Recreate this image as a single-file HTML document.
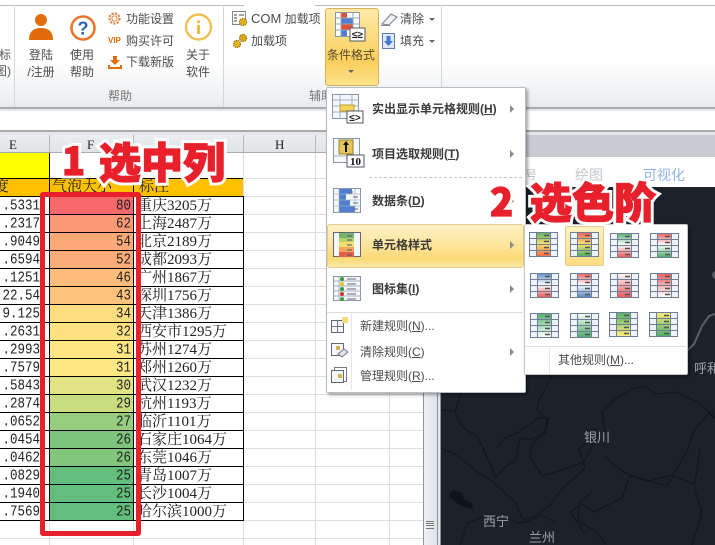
<!DOCTYPE html>
<html lang="zh"><head><meta charset="utf-8"><style>
html,body{margin:0;padding:0}
body{width:715px;height:545px;overflow:hidden;position:relative;background:#fff;font-family:"Liberation Sans","Noto Sans CJK SC",sans-serif;color:#4c4c4c;font-size:12px}
.a,.t{position:absolute;white-space:nowrap}
.t{line-height:16px}
.c{text-align:center}
.cell{position:absolute;font:15px/19px "Liberation Serif","Noto Serif CJK SC",serif;color:#222;white-space:nowrap}
.n{position:absolute;font:12.5px/19px "Liberation Mono",monospace;color:#222;white-space:nowrap;transform:scaleY(1.18)}
.hl{position:absolute;height:1px;background:#000;left:0;width:243px}
.gl{position:absolute;height:1px;background:#dcdee0;left:243px;width:180px}
.vl{position:absolute;width:1px;background:#dcdee0;top:153px;height:392px}
.m{font-weight:bold;color:#3a3a3a;font-size:12px}
.big,.bigf{position:absolute;white-space:nowrap;font-weight:900;font-family:"Noto Sans CJK SC","Liberation Sans",sans-serif}
.big{color:#fff;-webkit-text-stroke:7px #fff;text-shadow:0 0 3px rgba(90,90,90,.45)}
.bigf{color:#e8202c;-webkit-text-stroke:1.2px #e8202c}
.arr{position:absolute;width:0;height:0;border-left:3px solid transparent;border-right:3px solid transparent;border-top:3px solid #666}
.rar{position:absolute;left:510px;width:0;height:0;border-top:4px solid transparent;border-bottom:4px solid transparent;border-left:4px solid #8a8a8a}
u{text-decoration:underline}
</style></head><body>

<!-- ribbon -->
<div class="a" style="left:0;top:0;width:715px;height:5px;background:#fff"></div>
<div class="a" style="left:0;top:5px;width:244px;height:1px;background:#b9bbbe"></div>
<div class="a" style="left:315px;top:5px;width:400px;height:1px;background:#b9bbbe"></div>
<div class="a" style="left:0;top:6px;width:715px;height:101px;background:linear-gradient(#fff 0%,#fff 55%,#e9ecef 100%)"></div>
<div class="a" style="left:14px;top:7px;width:1px;height:100px;background:#d4d7da"></div>
<div class="a" style="left:223px;top:7px;width:1px;height:100px;background:#d4d7da"></div>
<div class="a" style="left:441px;top:7px;width:1px;height:100px;background:#d4d7da"></div>
<div class="a" style="left:0;top:107px;width:715px;height:2px;background:#a9acaf"></div>
<div class="a" style="left:0;top:109px;width:715px;height:2px;background:#e6e7e9"></div>
<div class="a" style="left:0;top:130px;width:715px;height:2px;background:#a8aaad"></div>
<div class="a" style="left:0;top:132px;width:715px;height:3px;background:#e4e6e9"></div>

<div class="t" style="left:-1px;top:47px;color:#555">标</div>
<div class="t" style="left:-5px;top:63px;color:#555">图)</div>

<!-- person -->
<svg class="a" style="left:26px;top:12px" width="30" height="30" viewBox="0 0 30 30"><circle cx="15" cy="8" r="6" fill="#e36c0a"/><path d="M3 28c0-9 5-12 12-12s12 3 12 12z" fill="#e36c0a"/></svg>
<div class="t c" style="left:21px;top:47px;width:40px">登陆</div>
<div class="t c" style="left:21px;top:64px;width:40px">/注册</div>
<!-- help -->
<svg class="a" style="left:69px;top:14px" width="28" height="28" viewBox="0 0 28 28"><circle cx="14" cy="14" r="11.5" fill="#fff" stroke="#e8762c" stroke-width="2.6"/><text x="14" y="20.5" text-anchor="middle" font-family="Liberation Sans" font-weight="bold" font-size="18" fill="#2f62b5">?</text></svg>
<div class="t c" style="left:63px;top:47px;width:38px">使用</div>
<div class="t c" style="left:63px;top:64px;width:38px">帮助</div>

<svg class="a" style="left:107px;top:11px" width="15" height="15" viewBox="0 0 15 15"><circle cx="7.5" cy="7.5" r="5" fill="none" stroke="#e0884a" stroke-width="2.2" stroke-dasharray="2.2 1.2"/><circle cx="7.5" cy="7.5" r="2.6" fill="none" stroke="#e0884a" stroke-width="1"/></svg>
<div class="t" style="left:126px;top:11px">功能设置</div>
<div class="a" style="left:108px;top:36px;font:bold 8px/9px 'Liberation Sans';color:#e36c0a">VIP</div>
<div class="t" style="left:126px;top:33px">购买许可</div>
<svg class="a" style="left:108px;top:55px" width="14" height="15" viewBox="0 0 14 15"><path d="M5 1h4v4h3L7 10 2 5h3z" fill="#e36c0a"/><path d="M1 10v3h12v-3" fill="none" stroke="#e36c0a" stroke-width="2"/></svg>
<div class="t" style="left:126px;top:54px">下载新版</div>
<svg class="a" style="left:184px;top:12px" width="29" height="30" viewBox="0 0 29 30"><circle cx="14.5" cy="15" r="12.5" fill="#fff" stroke="#f2bf52" stroke-width="2.4"/><rect x="13.2" y="13" width="2.6" height="9" fill="#f0b030"/><rect x="13.2" y="8.5" width="2.6" height="2.6" fill="#f0b030"/></svg>
<div class="t c" style="left:179px;top:47px;width:38px">关于</div>
<div class="t c" style="left:179px;top:64px;width:38px">软件</div>
<div class="t c" style="left:100px;top:88px;width:40px;color:#777">帮助</div>

<svg class="a" style="left:232px;top:11px" width="16" height="16" viewBox="0 0 16 16"><rect x=".5" y=".5" width="13" height="13" fill="#fff" stroke="#7a8a9c"/><path d="M2 4h3M2 7h3M2 10h3M7 4h5" stroke="#444"/><circle cx="11" cy="11" r="3.6" fill="#e0b020" stroke="#8a6c10" stroke-dasharray="1.4 .8"/></svg>
<div class="t" style="left:251px;top:11px"><span style="font-size:13px">COM</span> 加载项</div>
<svg class="a" style="left:232px;top:33px" width="16" height="16" viewBox="0 0 16 16"><circle cx="5" cy="11" r="3.6" fill="#e0b020" stroke="#8a6c10" stroke-dasharray="1.4 .8"/><circle cx="11" cy="5" r="3.6" fill="#d8a818" stroke="#8a6c10" stroke-dasharray="1.4 .8"/></svg>
<div class="t" style="left:251px;top:33px">加载项</div>
<div class="t" style="left:309px;top:88px;color:#777">辅助</div>

<!-- cond format button -->
<div class="a" style="left:325px;top:8px;width:52px;height:76px;border:1px solid #d9b15b;border-radius:3px;background:linear-gradient(#fde9a8 0%,#fcd977 45%,#fbcf5e 70%,#fde28f 100%)"></div>
<svg class="a" style="left:335px;top:12px" width="31" height="30" viewBox="0 0 31 30"><rect x=".5" y=".5" width="24" height="24" fill="#fff" stroke="#8a97a8"/><rect x="6" y="1" width="6" height="5" fill="#e0503c"/><rect x="6" y="6" width="12" height="6" fill="#4f7fd0"/><rect x="6" y="12" width="12" height="6" fill="#e0503c"/><rect x="6" y="18" width="6" height="6" fill="#4f7fd0"/><path d="M1 6h24M1 12h24M1 18h24M6 1v24M18 1v24" stroke="#9aa6b5" fill="none"/><rect x="15" y="16" width="15" height="13" fill="#fff" stroke="#555"/><text x="22.5" y="26" text-anchor="middle" font-size="10" font-weight="bold" font-family="Liberation Sans" fill="#222">≤≥</text></svg>
<div class="t c" style="left:325px;top:47px;width:52px;color:#5a4a2a">条件格式</div>
<div class="arr" style="left:348px;top:70px"></div>

<svg class="a" style="left:381px;top:12px" width="17" height="14" viewBox="0 0 17 14"><path d="M1 12L10 2l6 3-8 8z" fill="#eef0f3" stroke="#78828e"/><path d="M0 13.5h9" stroke="#78828e"/></svg>
<div class="t" style="left:400px;top:11px">清除</div>
<div class="arr" style="left:429px;top:18px"></div>
<svg class="a" style="left:382px;top:33px" width="15" height="16" viewBox="0 0 15 16"><rect x=".5" y=".5" width="12" height="15" fill="#dfe8f5" stroke="#5f7fb0"/><path d="M4.5 3h4v5h2.5L6.5 13 2 8h2.5z" fill="#3f78d0"/></svg>
<div class="t" style="left:400px;top:33px">填充</div>
<div class="arr" style="left:429px;top:40px"></div>

<!-- column headers -->
<div class="a" style="left:0;top:135px;width:423px;height:18px;background:linear-gradient(#eceef1,#dfe2e6)"></div>
<div class="a" style="left:49px;top:135px;width:1px;height:18px;background:#b4b7bb"></div>
<div class="a" style="left:133px;top:135px;width:1px;height:18px;background:#b4b7bb"></div>
<div class="a" style="left:243px;top:135px;width:1px;height:18px;background:#b4b7bb"></div>
<div class="a" style="left:315px;top:135px;width:1px;height:18px;background:#b4b7bb"></div>
<div class="cell" style="left:9px;top:135px;font-size:13px">E</div>
<div class="cell" style="left:87px;top:135px;font-size:13px">F</div>
<div class="cell" style="left:275px;top:135px;font-size:13px">H</div>
<div class="a" style="left:0;top:152px;width:423px;height:1px;background:#a8abaf"></div>

<!-- grid -->
<div class="a" style="left:0;top:153px;width:49px;height:25px;background:#ffff00"></div>
<div class="a" style="left:0;top:178px;width:243px;height:19px;background:#ffc000"></div>
<div class="vl" style="left:315px"></div>
<div class="vl" style="left:389px"></div>
<div class="vl" style="left:243px"></div>
<div class="gl" style="top:178px"></div><div class="gl" style="top:196px"></div><div class="gl" style="top:214px"></div><div class="gl" style="top:232px"></div><div class="gl" style="top:250px"></div><div class="gl" style="top:268px"></div><div class="gl" style="top:286px"></div><div class="gl" style="top:304px"></div><div class="gl" style="top:322px"></div><div class="gl" style="top:340px"></div><div class="gl" style="top:358px"></div><div class="gl" style="top:376px"></div><div class="gl" style="top:394px"></div><div class="gl" style="top:412px"></div><div class="gl" style="top:430px"></div><div class="gl" style="top:448px"></div><div class="gl" style="top:466px"></div><div class="gl" style="top:484px"></div><div class="gl" style="top:502px"></div><div class="gl" style="top:520px"></div><div class="gl" style="top:538px"></div>
<div class="gl" style="top:538px;left:0;width:243px"></div>
<div class="a" style="left:49px;top:521px;width:1px;height:24px;background:#dcdee0"></div>
<div class="a" style="left:133px;top:521px;width:1px;height:24px;background:#dcdee0"></div>

<!-- F colours -->
<div class="a" style="left:50px;top:197px;width:83px;height:17px;background:#f8696b"></div>
<div class="a" style="left:50px;top:215px;width:83px;height:17px;background:#fb9a75"></div>
<div class="a" style="left:50px;top:233px;width:83px;height:17px;background:#fca877"></div>
<div class="a" style="left:50px;top:251px;width:83px;height:17px;background:#fcac78"></div>
<div class="a" style="left:50px;top:269px;width:83px;height:17px;background:#fdbc7b"></div>
<div class="a" style="left:50px;top:287px;width:83px;height:17px;background:#fdc37c"></div>
<div class="a" style="left:50px;top:305px;width:83px;height:17px;background:#fedd81"></div>
<div class="a" style="left:50px;top:323px;width:83px;height:17px;background:#fee282"></div>
<div class="a" style="left:50px;top:341px;width:83px;height:17px;background:#ffe683"></div>
<div class="a" style="left:50px;top:359px;width:83px;height:17px;background:#ffe884"></div>
<div class="a" style="left:50px;top:377px;width:83px;height:17px;background:#e2e383"></div>
<div class="a" style="left:50px;top:395px;width:83px;height:17px;background:#c8dc80"></div>
<div class="a" style="left:50px;top:413px;width:83px;height:17px;background:#96cd7e"></div>
<div class="a" style="left:50px;top:431px;width:83px;height:17px;background:#7dc57c"></div>
<div class="a" style="left:50px;top:449px;width:83px;height:17px;background:#82c67c"></div>
<div class="a" style="left:50px;top:467px;width:83px;height:17px;background:#63be7b"></div>
<div class="a" style="left:50px;top:485px;width:83px;height:17px;background:#63be7b"></div>
<div class="a" style="left:50px;top:503px;width:83px;height:17px;background:#63be7b"></div>

<div class="a" style="left:49px;top:153px;width:1px;height:368px;background:#000"></div>
<div class="a" style="left:133px;top:178px;width:1px;height:343px;background:#000"></div>
<div class="a" style="left:243px;top:196px;width:1px;height:325px;background:#000"></div>
<div class="hl" style="top:178px"></div><div class="hl" style="top:196px"></div><div class="hl" style="top:214px"></div><div class="hl" style="top:232px"></div><div class="hl" style="top:250px"></div><div class="hl" style="top:268px"></div><div class="hl" style="top:286px"></div><div class="hl" style="top:304px"></div><div class="hl" style="top:322px"></div><div class="hl" style="top:340px"></div><div class="hl" style="top:358px"></div><div class="hl" style="top:376px"></div><div class="hl" style="top:394px"></div><div class="hl" style="top:412px"></div><div class="hl" style="top:430px"></div><div class="hl" style="top:448px"></div><div class="hl" style="top:466px"></div><div class="hl" style="top:484px"></div><div class="hl" style="top:502px"></div><div class="hl" style="top:520px"></div>

<!-- cell text -->
<div class="cell" style="left:-6px;top:178px">度</div>
<div class="cell" style="left:52px;top:178px">气泡大小</div>
<div class="cell" style="left:139px;top:178px">标注</div>

<div class="n" style="right:675px;top:197px">.5331</div><div class="n" style="right:675px;top:215px">.2317</div><div class="n" style="right:675px;top:233px">.9049</div><div class="n" style="right:675px;top:251px">.6594</div><div class="n" style="right:675px;top:269px">.1251</div><div class="n" style="right:675px;top:287px">22.54</div><div class="n" style="right:675px;top:305px">9.125</div><div class="n" style="right:675px;top:323px">.2631</div><div class="n" style="right:675px;top:341px">.2993</div><div class="n" style="right:675px;top:359px">.7579</div><div class="n" style="right:675px;top:377px">.5843</div><div class="n" style="right:675px;top:395px">.2874</div><div class="n" style="right:675px;top:413px">.0652</div><div class="n" style="right:675px;top:431px">.0454</div><div class="n" style="right:675px;top:449px">.0462</div><div class="n" style="right:675px;top:467px">.0829</div><div class="n" style="right:675px;top:485px">.1940</div><div class="n" style="right:675px;top:503px">.7569</div>

<div class="n" style="right:584px;top:197px">80</div><div class="n" style="right:584px;top:215px">62</div><div class="n" style="right:584px;top:233px">54</div><div class="n" style="right:584px;top:251px">52</div><div class="n" style="right:584px;top:269px">46</div><div class="n" style="right:584px;top:287px">43</div><div class="n" style="right:584px;top:305px">34</div><div class="n" style="right:584px;top:323px">32</div><div class="n" style="right:584px;top:341px">31</div><div class="n" style="right:584px;top:359px">31</div><div class="n" style="right:584px;top:377px">30</div><div class="n" style="right:584px;top:395px">29</div><div class="n" style="right:584px;top:413px">27</div><div class="n" style="right:584px;top:431px">26</div><div class="n" style="right:584px;top:449px">26</div><div class="n" style="right:584px;top:467px">25</div><div class="n" style="right:584px;top:485px">25</div><div class="n" style="right:584px;top:503px">25</div>

<div class="cell" style="left:137px;top:197px">重庆3205万</div><div class="cell" style="left:137px;top:215px">上海2487万</div><div class="cell" style="left:137px;top:233px">北京2189万</div><div class="cell" style="left:137px;top:251px">成都2093万</div><div class="cell" style="left:137px;top:269px">广州1867万</div><div class="cell" style="left:137px;top:287px">深圳1756万</div><div class="cell" style="left:137px;top:305px">天津1386万</div><div class="cell" style="left:137px;top:323px">西安市1295万</div><div class="cell" style="left:137px;top:341px">苏州1274万</div><div class="cell" style="left:137px;top:359px">郑州1260万</div><div class="cell" style="left:137px;top:377px">武汉1232万</div><div class="cell" style="left:137px;top:395px">杭州1193万</div><div class="cell" style="left:137px;top:413px">临沂1101万</div><div class="cell" style="left:137px;top:431px">石家庄1064万</div><div class="cell" style="left:137px;top:449px">东莞1046万</div><div class="cell" style="left:137px;top:467px">青岛1007万</div><div class="cell" style="left:137px;top:485px">长沙1004万</div><div class="cell" style="left:137px;top:503px">哈尔滨1000万</div>

<!-- scrollbar -->
<div class="a" style="left:423px;top:135px;width:1px;height:410px;background:#8f9296"></div>
<div class="a" style="left:424px;top:135px;width:13px;height:410px;background:linear-gradient(90deg,#eef0f4,#dfe2e8)"></div>
<div class="a" style="left:437px;top:135px;width:1px;height:410px;background:#8f9296"></div>
<div class="a" style="left:438px;top:135px;width:2px;height:410px;background:#e4e6ea"></div>
<div class="a" style="left:440px;top:135px;width:1px;height:410px;background:#8f9296"></div>
<div class="a" style="left:426px;top:521px;width:8px;height:6px;border-top:1px solid #777;border-bottom:1px solid #777"></div>
<div class="a" style="left:426px;top:523px;width:8px;height:1px;background:#777"></div>
<div class="a" style="left:426px;top:525px;width:8px;height:1px;background:#777"></div>

<!-- right panel -->
<div class="a" style="left:441px;top:135px;width:274px;height:22px;background:#c8ccd2"></div>
<div class="a" style="left:441px;top:157px;width:274px;height:30px;background:#fff"></div>
<div class="t" style="left:525px;top:167px;color:#b8bcc2">号</div>
<div class="t" style="left:575px;top:167px;color:#c2c5c9;font-size:14px">绘图</div>
<div class="t" style="left:643px;top:167px;color:#8fb4e6;font-size:14px">可视化</div>
<svg class="a" style="left:441px;top:187px" width="274" height="358" viewBox="441 187 274 358">
<rect x="441" y="187" width="274" height="358" fill="#1c222b"/>
<g fill="none" stroke="#11151b" stroke-width="1">
<path d="M441 410l14 2 3-10 4-12M455 412l8 16 14 8 6 12 13 30 8-10 12-8 4-22 12 2 12-8 3-12-10-10 2-10 16-30"/>
<path d="M441 448l14 6 20 16 18 12 22 20 8 18 12-4 16-12 10-14 24-22-6-20 14-8"/>
<path d="M497 448l8-10 14-6 19-14 10 0 -2 14-14 12-2 12 12 20 20-6 22-8 8-16 4-18"/>
<path d="M605 432l-3-20 14-14 18-10 10-2 12 8 20-2 22 10 22 20"/>
<path d="M605 457l20 16 24 8 24-6 14-24 8-22 14-16 8 8 18-10"/>
<path d="M630 476l-8 22-28 14-12-8-12 8 10 14 4 8M592 492l-12 10 -2 18 18 12 10 12M630 476l36 10 8-10 20 8"/>
<path d="M700 450l-6 38 8 24-10 33"/>
<path d="M460 545l8-22 20-8 16 2 14 6 10-2 14-6 14 8"/>
</g>
<path d="M449 493l5-3 8 3 2 6 8 4 1 6-9-2-8-4-6-5z" fill="#0f141a"/>
<path d="M686 352l8-8 8-18 7-10 6-2" fill="none" stroke="#5a5f66" stroke-width="2"/>
<circle cx="716" cy="275" r="4" fill="#555a60"/>
<g font-family="Liberation Sans,Noto Sans CJK SC,sans-serif" font-size="13" fill="#9ea2a7">
<text x="584" y="442">银川</text>
<text x="483" y="526">西宁</text>
<text x="529" y="542">兰州</text>
<text x="694" y="373">呼和</text>
</g>
</svg>

<!-- red rect -->
<div class="a" style="left:40px;top:192px;width:91px;height:334px;border:5px solid #e8202c;border-radius:3px"></div>

<!-- dropdown menu -->
<div class="a" style="left:326px;top:87px;width:198px;height:304px;background:#fff;border:1px solid #b9bcc0;border-radius:2px;box-shadow:2px 2px 3px rgba(0,0,0,.35)"></div>
<div class="a" style="left:327px;top:224px;width:195px;height:42px;border:1px solid #e8cb8a;border-radius:3px;background:linear-gradient(#fef2c6 0%,#fde49a 50%,#fcd974 80%,#fde9a9 100%)"></div>

<svg class="a" style="left:332px;top:94px" width="32" height="30" viewBox="0 0 32 30"><rect x=".5" y=".5" width="26" height="24" fill="#f4f7fb" stroke="#8a97a8"/><path d="M1 6h26M1 12h26M1 18h26M8 1v24M20 1v24" stroke="#a8b2be" fill="none"/><rect x="8" y="11" width="14" height="6" fill="#f5d65a" stroke="#b9a030"/><rect x="15" y="17" width="16" height="12" fill="#fff" stroke="#556"/><text x="23" y="27" text-anchor="middle" font-size="10" font-weight="bold" font-family="Liberation Sans" fill="#222">≤&gt;</text></svg>
<svg class="a" style="left:333px;top:138px" width="32" height="30" viewBox="0 0 32 30"><rect x=".5" y=".5" width="26" height="24" fill="#f4f7fb" stroke="#8a97a8"/><path d="M1 18h26M20 1v24" stroke="#a8b2be" fill="none"/><rect x="6" y="2" width="14" height="14" fill="#e6c55c" stroke="#9c8430"/><path d="M13 3l3 4h-2v7h-2V7h-2z" fill="#111"/><rect x="14" y="17" width="17" height="12" fill="#fff" stroke="#556"/><text x="22.5" y="27" text-anchor="middle" font-size="11" font-weight="bold" font-family="Liberation Serif" fill="#111">10</text></svg>
<svg class="a" style="left:333px;top:188px" width="29" height="26" viewBox="0 0 29 26"><rect x=".5" y=".5" width="27" height="24" fill="#f4f7fb" stroke="#8a97a8"/><path d="M6 1h13v5H6zM6 6h7v6H6zM6 12h11v6H6zM6 18h16v6H6z" fill="#4f7fd0"/><path d="M1 6h27M1 12h27M1 18h27M6 1v24M22 1v24" stroke="#a8b2be" fill="none" opacity=".7"/><path d="M15 4h5M20 9h5M20 15h5M20 21h5" stroke="#667"/></svg>
<svg class="a" style="left:333px;top:232px" width="29" height="26" viewBox="0 0 29 26"><rect x=".5" y=".5" width="27" height="24" fill="#f4f7fb" stroke="#667"/><rect x="6" y="1" width="15" height="5" fill="#76b36c"/><rect x="6" y="6" width="15" height="4" fill="#b7d36c"/><rect x="6" y="10" width="15" height="5" fill="#f5dc6c"/><rect x="6" y="15" width="15" height="5" fill="#f4a45c"/><rect x="6" y="20" width="15" height="5" fill="#e5604c"/><path d="M14 4h5M14 8h5M14 13h5M14 18h5M14 23h5" stroke="#556"/></svg>
<svg class="a" style="left:333px;top:276px" width="29" height="26" viewBox="0 0 29 26"><rect x=".5" y=".5" width="27" height="24" fill="#f4f7fb" stroke="#8a97a8"/><path d="M1 5h27M1 10h27M1 15h27M1 20h27M6 1v24" stroke="#a8b2be" fill="none"/><circle cx="9" cy="3" r="2" fill="#3c9a3c"/><circle cx="9" cy="8" r="2" fill="#e6c22c"/><circle cx="9" cy="13" r="2" fill="#3c9a3c"/><circle cx="9" cy="18" r="2" fill="#d0342c"/><circle cx="9" cy="23" r="2" fill="#3c9a3c"/><path d="M14 3h9M14 8h9M14 13h9M14 18h9M14 23h9" stroke="#667"/></svg>

<div class="t m" style="left:372px;top:101px">实出显示单元格规则(<u>H</u>)</div>
<div class="t m" style="left:372px;top:146px">项目选取规则(<u>T</u>)</div>
<div class="t m" style="left:372px;top:193px">数据条(<u>D</u>)</div>
<div class="t m" style="left:372px;top:237px">单元格样式</div>
<div class="t m" style="left:372px;top:281px">图标集(<u>I</u>)</div>
<div class="rar" style="top:105px"></div>
<div class="rar" style="top:150px"></div>
<div class="rar" style="top:197px"></div>
<div class="rar" style="top:241px"></div>
<div class="rar" style="top:285px"></div>
<div class="rar" style="top:348px"></div>
<div class="a" style="left:369px;top:177px;width:153px;height:0;border-top:1px dashed #c8c8c8"></div>
<div class="a" style="left:327px;top:312px;width:196px;height:1px;background:#dcdee0"></div>
<div class="a" style="left:351px;top:313px;width:1px;height:77px;background:#e4e6e8"></div>

<svg class="a" style="left:331px;top:317px" width="17" height="17" viewBox="0 0 17 17"><rect x=".5" y="3.5" width="12" height="12" fill="#f4f7fb" stroke="#667"/><path d="M1 9.500h12M6.500 4v12" stroke="#778"/><rect x="11" y="0" width="6" height="6" fill="#f2dc7c"/></svg>
<svg class="a" style="left:331px;top:342px" width="17" height="17" viewBox="0 0 17 17"><rect x=".5" y="1.500" width="12" height="12" fill="#f4f7fb" stroke="#667"/><rect x="5" y="4" width="4" height="4" fill="#d8b050"/><path d="M7 12l6-5 4 3-6 5z" fill="#dfe4ec" stroke="#778"/></svg>
<svg class="a" style="left:331px;top:367px" width="17" height="17" viewBox="0 0 17 17"><rect x="3.500" y=".5" width="12" height="14" fill="#fff" stroke="#778"/><rect x=".5" y="3.500" width="12" height="12" fill="#f4f7fb" stroke="#667"/><rect x="7" y="7" width="4" height="4" fill="#d8b050"/></svg>

<div class="t" style="left:360px;top:318px">新建规则(<u>N</u>)...</div>
<div class="t" style="left:360px;top:344px">清除规则(<u>C</u>)</div>
<div class="t" style="left:360px;top:368px">管理规则(<u>R</u>)...</div>

<!-- submenu -->
<div class="a" style="left:524px;top:224px;width:162px;height:149px;background:#fff;border:1px solid #c4c6c9;border-radius:2px;box-shadow:2px 2px 3px rgba(0,0,0,.35)"></div>
<div class="a" style="left:565px;top:226px;width:37px;height:38px;border:1px solid #e8cb8a;border-radius:2px;background:linear-gradient(#fef2c6,#fcdc80)"></div>

<svg class="a" style="left:524px;top:226px" width="162" height="116" viewBox="524 226 162 116">
<defs>
<linearGradient id="g1" x2="0" y2="1"><stop offset="0" stop-color="#4fae6b"/><stop offset=".5" stop-color="#ffe36c"/><stop offset="1" stop-color="#f46a4b"/></linearGradient>
<linearGradient id="g2" x2="0" y2="1"><stop offset="0" stop-color="#f05a5b"/><stop offset=".5" stop-color="#ffe36c"/><stop offset="1" stop-color="#4fae6b"/></linearGradient>
<linearGradient id="g3" x2="0" y2="1"><stop offset="0" stop-color="#4fae6b"/><stop offset=".5" stop-color="#fff"/><stop offset="1" stop-color="#f05a5b"/></linearGradient>
<linearGradient id="g4" x2="0" y2="1"><stop offset="0" stop-color="#f05a5b"/><stop offset=".5" stop-color="#fff"/><stop offset="1" stop-color="#4fae6b"/></linearGradient>
<linearGradient id="g5" x2="0" y2="1"><stop offset="0" stop-color="#5a8ac6"/><stop offset=".5" stop-color="#fff"/><stop offset="1" stop-color="#f05a5b"/></linearGradient>
<linearGradient id="g6" x2="0" y2="1"><stop offset="0" stop-color="#f05a5b"/><stop offset=".5" stop-color="#fff"/><stop offset="1" stop-color="#5a8ac6"/></linearGradient>
<linearGradient id="g7" x2="0" y2="1"><stop offset="0" stop-color="#fff"/><stop offset="1" stop-color="#f05a5b"/></linearGradient>
<linearGradient id="g8" x2="0" y2="1"><stop offset="0" stop-color="#f05a5b"/><stop offset="1" stop-color="#fff"/></linearGradient>
<linearGradient id="g9" x2="0" y2="1"><stop offset="0" stop-color="#4fae6b"/><stop offset="1" stop-color="#fff"/></linearGradient>
<linearGradient id="g10" x2="0" y2="1"><stop offset="0" stop-color="#fff"/><stop offset="1" stop-color="#4fae6b"/></linearGradient>
<linearGradient id="g11" x2="0" y2="1"><stop offset="0" stop-color="#4fae6b"/><stop offset="1" stop-color="#ffef7c"/></linearGradient>
<linearGradient id="g12" x2="0" y2="1"><stop offset="0" stop-color="#ffef7c"/><stop offset="1" stop-color="#4fae6b"/></linearGradient>
<g id="b"><rect x="0" y="0" width="29" height="24" fill="#eef3fb"/></g>
<g id="o"><path d="M.5.500h28v24H.5zM.5 6.500h28M.5 12.500h28M.5 18.500h28M7.500 0v24M21.500 0v24" fill="none" stroke="#6f7f95"/><path d="M15 3.500h5M15 9.500h5M15 15.500h5M15 21.500h5" stroke="#555" stroke-width="1.500"/></g>
</defs>
<g transform="translate(529 232)"><use href="#b"/><rect x="7" width="15" height="24" fill="url(#g1)"/><use href="#o"/></g>
<g transform="translate(570 232)"><use href="#b"/><rect x="7" width="15" height="24" fill="url(#g2)"/><use href="#o"/></g>
<g transform="translate(610 233)"><use href="#b"/><rect x="7" width="15" height="24" fill="url(#g3)"/><use href="#o"/></g>
<g transform="translate(650 233)"><use href="#b"/><rect x="7" width="15" height="24" fill="url(#g4)"/><use href="#o"/></g>
<g transform="translate(530 273)"><use href="#b"/><rect x="7" width="15" height="24" fill="url(#g5)"/><use href="#o"/></g>
<g transform="translate(570 273)"><use href="#b"/><rect x="7" width="15" height="24" fill="url(#g6)"/><use href="#o"/></g>
<g transform="translate(610 273)"><use href="#b"/><rect x="7" width="15" height="24" fill="url(#g7)"/><use href="#o"/></g>
<g transform="translate(650 273)"><use href="#b"/><rect x="7" width="15" height="24" fill="url(#g8)"/><use href="#o"/></g>
<g transform="translate(530 313)"><use href="#b"/><rect x="7" width="15" height="24" fill="url(#g9)"/><use href="#o"/></g>
<g transform="translate(570 313)"><use href="#b"/><rect x="7" width="15" height="24" fill="url(#g10)"/><use href="#o"/></g>
<g transform="translate(609 312)"><use href="#b"/><rect x="7" width="15" height="24" fill="url(#g11)"/><use href="#o"/></g>
<g transform="translate(649 312)"><use href="#b"/><rect x="7" width="15" height="24" fill="url(#g12)"/><use href="#o"/></g>
</svg>
<div class="a" style="left:525px;top:346px;width:161px;height:1px;background:#dfe0e2"></div>
<div class="a" style="left:549px;top:347px;width:1px;height:27px;background:#e6e7e9"></div>
<div class="t" style="left:558px;top:352px">其他规则(<u>M</u>)...</div>

<!-- big labels -->
<div class="big" style="left:62px;top:131px;font-size:38px;line-height:56px">1</div>
<div class="big" style="left:99px;top:133px;font-size:42px;line-height:56px">选中列</div>
<div class="big" style="left:490px;top:172px;font-size:38px;line-height:56px">2</div>
<div class="big" style="left:530px;top:173px;font-size:42px;line-height:56px">选色阶</div>
<div class="bigf" style="left:62px;top:131px;font-size:38px;line-height:56px">1</div>
<div class="bigf" style="left:99px;top:133px;font-size:42px;line-height:56px">选中列</div>
<div class="bigf" style="left:490px;top:172px;font-size:38px;line-height:56px">2</div>
<div class="bigf" style="left:530px;top:173px;font-size:42px;line-height:56px">选色阶</div>

</body></html>
